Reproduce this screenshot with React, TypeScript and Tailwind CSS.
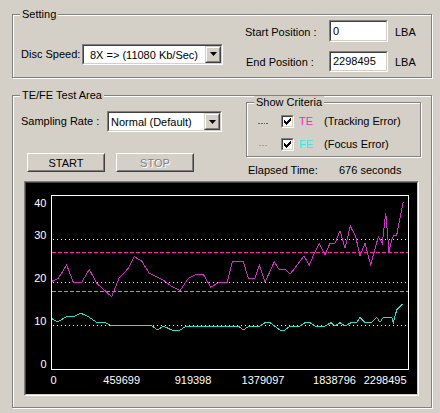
import React from 'react';

// classic win32 3D edges
const Sunken = ({ className = '', inner = '', children }: { className?: string; inner?: string; children?: React.ReactNode }) => (
  <div className={`border border-t-[#808080] border-l-[#808080] border-b-white border-r-white ${className}`}>
    <div className={`h-full w-full border border-t-[#404040] border-l-[#404040] border-b-[#d4d0c8] border-r-[#d4d0c8] ${inner}`}>
      {children}
    </div>
  </div>
);

const GroupBox = ({ label, className = '', children }: { label: string; className?: string; children?: React.ReactNode }) => (
  <div className={`relative border border-[#808080] shadow-[inset_1px_1px_0_#fff,1px_1px_0_#fff] ${className}`}>
    <span className="absolute left-[7px] top-[-7px] bg-[#d4d0c8] px-[2px]">{label}</span>
    {children}
  </div>
);

const DropButton = () => (
  <div className="h-full w-[16px] border border-t-[#d4d0c8] border-l-[#d4d0c8] border-b-[#404040] border-r-[#404040]">
    <div className="flex h-full w-full items-center justify-center border border-t-white border-l-white border-b-[#808080] border-r-[#808080] bg-[#d4d0c8]">
      <svg width="7" height="4" viewBox="0 0 7 4" className="block">
        <path d="M0 0h7L3.5 4z" fill="#000" />
      </svg>
    </div>
  </div>
);

const Combo = ({ text, className = '', pad = '' }: { text: string; className?: string; pad?: string }) => (
  <Sunken className={`h-[21px] ${className}`} inner="flex bg-white">
    <div className={`flex-1 whitespace-nowrap pt-[3px] ${pad}`}>{text}</div>
    <DropButton />
  </Sunken>
);

const PushButton = ({ label, disabled }: { label: string; disabled?: boolean }) => (
  <div className="h-[19px] w-[78px] border border-t-white border-l-white border-b-[#404040] border-r-[#404040]">
    <div className="flex h-full w-full justify-center border border-t-[#d4d0c8] border-l-[#d4d0c8] border-b-[#808080] border-r-[#808080] pt-[2px]">
      {disabled ? (
        <span className="text-[#808080] [text-shadow:1px_1px_0_#fff]">{label}</span>
      ) : (
        <span>{label}</span>
      )}
    </div>
  </div>
);

const CheckBox = () => (
  <Sunken className="h-[13px] w-[13px] shrink-0" inner="flex items-center justify-center bg-white">
    <svg width="7" height="7" viewBox="0 0 7 7" className="block" shapeRendering="crispEdges">
      <path d="M0 2h1v1h1v1h1V3h1V2h1V1h1V0h1v3H6v1H5v1H4v1H3v1H2V6H1V5H0z" fill="#000" />
    </svg>
  </Sunken>
);

const teData = [
  [51, 281.7], [58.3, 278.3], [66.7, 265], [73.3, 282.3], [81.7, 282.3], [89.3, 269.3], [96.7, 283.3],
  [105, 290.7], [111.7, 296.7], [119, 278.3], [128.3, 268.3], [134.3, 256.7], [141.7, 261], [149.3, 273.3],
  [163.3, 280], [171, 286], [180, 290.7], [188.3, 278.3], [196.7, 274.3], [203.3, 274.3], [210.7, 287.3],
  [218.3, 282.7], [227, 282.7], [232.3, 261.7], [243.3, 261.7], [248.3, 278.3], [255, 278.3], [259.3, 265],
  [265, 282.3], [274.3, 261.7], [279, 269.3], [285, 269.3], [290, 274.3], [304, 256], [309.3, 265],
  [315, 251.7], [319.3, 243.3], [325, 255], [330, 243.3], [335, 243.3], [340, 230.7], [345, 248.3],
  [350.3, 226], [355.7, 236.7], [360, 255.7], [365, 243.3], [370.7, 265], [378.3, 236.7], [382.3, 243.3],
  [385.7, 212.7], [389, 251.7], [391.7, 240], [394, 235], [396.7, 235], [403.3, 201.7],
];

const feData = [
  [51, 318.3], [57.7, 321.7], [66.7, 316.7], [73.3, 316.7], [81, 313.3], [88.3, 316.7], [96.7, 322.3],
  [105, 322.3], [111.7, 325.7], [151.7, 325.7], [157.7, 330], [163.3, 326], [171.7, 330], [180, 330],
  [186.7, 326], [238.3, 326], [243.3, 330], [248.3, 326.7], [260, 326], [265, 322.7], [270, 322.7],
  [280, 330], [285, 330], [290, 326], [300, 326], [305, 322.7], [310, 322.7], [315, 326], [325, 326],
  [331, 322.7], [335, 326], [340, 322.7], [345, 326], [351, 322.7], [356.7, 322.7], [360, 317.3],
  [365, 322.3], [371.7, 322.3], [376.7, 317.3], [380, 322.3], [383.3, 317.3], [391.7, 317.3],
  [393.3, 322.7], [396.7, 310], [400, 306.7], [402.3, 304.3],
];

const pts = (d: number[][]) => d.map(([x, y]) => `${x},${y}`).join(' ');

const Chart = () => (
  <svg width="391" height="211" viewBox="26 183 391 211" className="block">
    <rect x="26" y="183" width="391" height="211" fill="#000" />
    {/* grid */}
    {[239.5, 282.5, 325.5].map((y) => (
      <line key={y} x1="53" x2="408" y1={y} y2={y} stroke="#fff" strokeDasharray="1 3" shapeRendering="crispEdges" />
    ))}
    <line x1="52" x2="408" y1="252.5" y2="252.5" stroke="#ff22aa" strokeDasharray="4 2" shapeRendering="crispEdges" />
    <line x1="52" x2="408" y1="291.5" y2="291.5" stroke="#22d0d0" strokeDasharray="4 2" shapeRendering="crispEdges" />
    <polyline points={pts(feData)} fill="none" stroke="#3ad8c8" strokeWidth="1" shapeRendering="crispEdges" />
    <polyline points={pts(teData)} fill="none" stroke="#cc33c4" strokeWidth="1" shapeRendering="crispEdges" />
    <rect x="51.5" y="195.5" width="357" height="174" fill="none" stroke="#fff" shapeRendering="crispEdges" />
    {/* axis labels */}
    <g fill="#fff" fontSize="11" textAnchor="end">
      <text x="46.5" y="207">40</text>
      <text x="46.5" y="239">30</text>
      <text x="46.5" y="282">20</text>
      <text x="46.5" y="325">10</text>
      <text x="46.5" y="368">0</text>
    </g>
    <g fill="#fff" fontSize="11" textAnchor="middle">
      <text x="50.5" y="384" textAnchor="start">0</text>
      <text x="121.7" y="384">459699</text>
      <text x="193" y="384">919398</text>
      <text x="263" y="384">1379097</text>
      <text x="334.5" y="384">1838796</text>
      <text x="406.5" y="384" textAnchor="end">2298495</text>
    </g>
  </svg>
);

export default function App() {
  return (
    <div className="h-[413px] w-[440px] overflow-hidden bg-[#d4d0c8] pt-[14px] font-['Liberation_Sans',Arial,sans-serif] text-[11px] leading-[13px] text-black">
      {/* Setting */}
      <GroupBox label="Setting" className="ml-[12px] h-[64px] w-[420px]">
        <div className="flex">
          <div className="ml-[8px] mt-[21px] flex items-center">
            <span className="w-[61px]">Disc Speed:</span>
            <Combo className="w-[141px]" pad="pl-[6px]" text="8X => (11080 Kb/Sec)" />
          </div>
          <div className="ml-[22px] mt-[5px] flex flex-col">
            <div className="flex items-start">
              <span className="mt-[6px] w-[84px]">Start Position :</span>
              <Sunken className="h-[22px] w-[59px]" inner="flex items-center bg-white pl-[2px]">0</Sunken>
              <span className="ml-[7px] mt-[6px]">LBA</span>
            </div>
            <div className="mt-[9px] flex items-start">
              <span className="mt-[5px] w-[84px] pl-[1px]">End Position :</span>
              <Sunken className="h-[21px] w-[59px]" inner="flex items-center bg-white pl-[2px]">2298495</Sunken>
              <span className="ml-[7px] mt-[5px]">LBA</span>
            </div>
          </div>
        </div>
      </GroupBox>

      {/* TE/FE Test Area */}
      <GroupBox label="TE/FE Test Area" className="ml-[12px] mt-[17px] h-[313px] w-[420px]">
        <div className="flex">
          <div className="w-[233px]">
            <div className="ml-[8px] mt-[15px] flex items-center">
              <span className="w-[86px]">Sampling Rate :</span>
              <Combo className="w-[115px]" pad="pl-[2px]" text="Normal (Default)" />
            </div>
            <div className="ml-[14px] mt-[21px] flex gap-[11px]">
              <PushButton label="START" />
              <PushButton label="STOP" disabled />
            </div>
          </div>
          <div className="w-[175px]">
            <GroupBox label="Show Criteria" className="mt-[6px] h-[55px] w-[175px]">
              <div className="mt-[12px] flex h-[13px] items-center pl-[11px]">
                <div className="mt-[4px] flex w-[10px] gap-[1px]">
                  <span className="h-[1px] w-[2px] bg-[#ff00d0]" />
                  <span className="h-[1px] w-[2px] bg-[#ff00d0]" />
                  <span className="h-[1px] w-[2px] bg-[#ff00d0]" />
                  <span className="h-[1px] w-[2px] bg-[#ff00d0]" />
                </div>
                <span className="ml-[13px]"><CheckBox /></span>
                <span className="ml-[5px] w-[25px] text-[#e830b8]">TE</span>
                <span>(Tracking Error)</span>
              </div>
              <div className="mt-[10px] flex h-[13px] items-center pl-[11px]">
                <div className="mt-[2px] flex w-[10px] gap-[1px] pl-[1px]">
                  <span className="h-[1px] w-[2px] bg-[#00e8e0]" />
                  <span className="h-[1px] w-[2px] bg-[#00e8e0]" />
                  <span className="h-[1px] w-[2px] bg-[#00e8e0]" />
                </div>
                <span className="ml-[13px]"><CheckBox /></span>
                <span className="ml-[5px] w-[25px] text-[#30ece4]">FE</span>
                <span>(Focus Error)</span>
              </div>
            </GroupBox>
            <div className="mt-[7px] flex pl-[2px]">
              <span className="w-[91px]">Elapsed Time:</span>
              <span>676 seconds</span>
            </div>
          </div>
        </div>

        <Sunken className="ml-[11px] mt-[4px] h-[215px] w-[395px]" inner="bg-black">
          <Chart />
        </Sunken>
      </GroupBox>
    </div>
  );
}
